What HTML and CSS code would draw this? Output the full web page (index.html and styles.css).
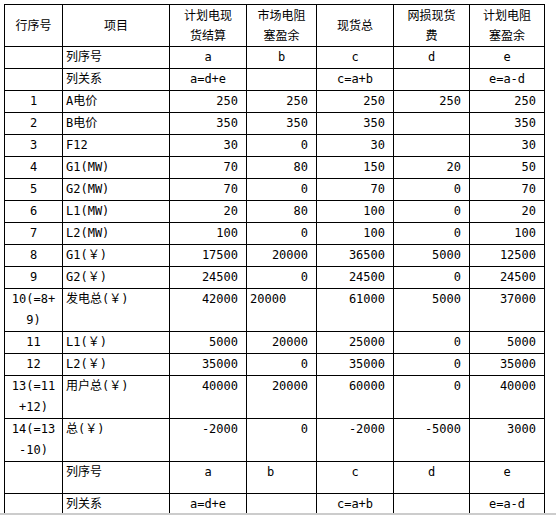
FILE: index.html
```html
<!DOCTYPE html>
<html lang="zh-CN">
<head>
<meta charset="utf-8">
<title>现货结算表</title>
<link rel="stylesheet" href="styles.css">
</head>
<body>
<div class="page">
<table class="grid">
<colgroup>
<col class="w1"><col class="w2"><col class="w3"><col class="w4"><col class="w5"><col class="w6"><col class="w7">
</colgroup>
<thead>
<tr class="head">
<th>行序号</th><th>项目</th><th>计划电现<br>货结算</th><th>市场电阻<br>塞盈余</th><th>现货总</th><th>网损现货<br>费</th><th>计划电阻<br>塞盈余</th>
</tr>
</thead>
<tbody>
<tr><td class="c"></td><td class="l">列序号</td><td class="c">a</td><td class="c">b</td><td class="c">c</td><td class="c">d</td><td class="c">e</td></tr>
<tr><td class="c"></td><td class="l">列关系</td><td class="c">a=d+e</td><td class="c"></td><td class="c">c=a+b</td><td class="c"></td><td class="c">e=a-d</td></tr>
<tr><td class="c">1</td><td class="l">A电价</td><td class="r">250</td><td class="r">250</td><td class="r">250</td><td class="r">250</td><td class="r">250</td></tr>
<tr><td class="c">2</td><td class="l">B电价</td><td class="r">350</td><td class="r">350</td><td class="r">350</td><td class="r"></td><td class="r">350</td></tr>
<tr><td class="c">3</td><td class="l">F12</td><td class="r">30</td><td class="r">0</td><td class="r">30</td><td class="r"></td><td class="r">30</td></tr>
<tr><td class="c">4</td><td class="l">G1(MW)</td><td class="r">70</td><td class="r">80</td><td class="r">150</td><td class="r">20</td><td class="r">50</td></tr>
<tr><td class="c">5</td><td class="l">G2(MW)</td><td class="r">70</td><td class="r">0</td><td class="r">70</td><td class="r">0</td><td class="r">70</td></tr>
<tr><td class="c">6</td><td class="l">L1(MW)</td><td class="r">20</td><td class="r">80</td><td class="r">100</td><td class="r">0</td><td class="r">20</td></tr>
<tr><td class="c">7</td><td class="l">L2(MW)</td><td class="r">100</td><td class="r">0</td><td class="r">100</td><td class="r">0</td><td class="r">100</td></tr>
<tr><td class="c">8</td><td class="l">G1(￥)</td><td class="r">17500</td><td class="r">20000</td><td class="r">36500</td><td class="r">5000</td><td class="r">12500</td></tr>
<tr><td class="c">9</td><td class="l">G2(￥)</td><td class="r">24500</td><td class="r">0</td><td class="r">24500</td><td class="r">0</td><td class="r">24500</td></tr>
<tr><td class="c">10(=8+<br>9)</td><td class="l">发电总(￥)</td><td class="r">42000</td><td class="lb">20000</td><td class="r">61000</td><td class="r">5000</td><td class="r">37000</td></tr>
<tr><td class="c">11</td><td class="l">L1(￥)</td><td class="r">5000</td><td class="r">20000</td><td class="r">25000</td><td class="r">0</td><td class="r">5000</td></tr>
<tr><td class="c">12</td><td class="l">L2(￥)</td><td class="r">35000</td><td class="r">0</td><td class="r">35000</td><td class="r">0</td><td class="r">35000</td></tr>
<tr><td class="c">13(=11<br>+12)</td><td class="l">用户总(￥)</td><td class="r">40000</td><td class="r">20000</td><td class="r">60000</td><td class="r">0</td><td class="r">40000</td></tr>
<tr><td class="c">14(=13<br>-10)</td><td class="l">总(￥)</td><td class="r">-2000</td><td class="r">0</td><td class="r">-2000</td><td class="r">-5000</td><td class="r">3000</td></tr>
<tr class="tall"><td class="c"></td><td class="l">列序号</td><td class="c">a</td><td class="lb2">b</td><td class="c">c</td><td class="c">d</td><td class="c">e</td></tr>
<tr><td class="c"></td><td class="l">列关系</td><td class="c">a=d+e</td><td class="c"></td><td class="c">c=a+b</td><td class="c"></td><td class="c">e=a-d</td></tr>
</tbody>
</table>
</div>
<div class="edge"></div>
</body>
</html>
```

FILE: styles.css
```css
html, body {
  margin: 0;
  padding: 0;
  background: #ffffff;
  overflow: hidden;
  height: 100%;
}

.page {
  padding: 4px 0 0 4px;
}

.grid {
  border-collapse: collapse;
  table-layout: fixed;
  width: 541px;
  font-family: "DejaVu Sans Mono", "Noto Sans CJK SC", monospace;
  font-size: 12px;
  color: #000000;
}

.w1 { width: 58px; }
.w2 { width: 107px; }
.w3 { width: 77px; }
.w4 { width: 70px; }
.w5 { width: 77px; }
.w6 { width: 76px; }
.w7 { width: 75px; }

.grid th,
.grid td {
  border: 1px solid #000000;
  padding: 0 7px;
  white-space: nowrap;
  overflow: hidden;
}

.grid th {
  font-weight: normal;
  text-align: center;
  vertical-align: middle;
  line-height: 20px;
  padding-top: 1px;
}

.grid td {
  line-height: 21px;
  vertical-align: top;
}

.grid td.c { text-align: center; padding: 0 1px; }
.grid td.l { text-align: left; padding-left: 3px; }
.grid td.r { text-align: right; padding-right: 8px; }
.grid td.lb { text-align: left; padding-left: 3px; }
.grid td.lb2 { text-align: left; padding-left: 20px; }

.tall td { padding-bottom: 10px; }

.edge {
  position: fixed;
  left: 0;
  right: 0;
  bottom: 0;
  height: 2px;
  background: #cccccc;
}
```
